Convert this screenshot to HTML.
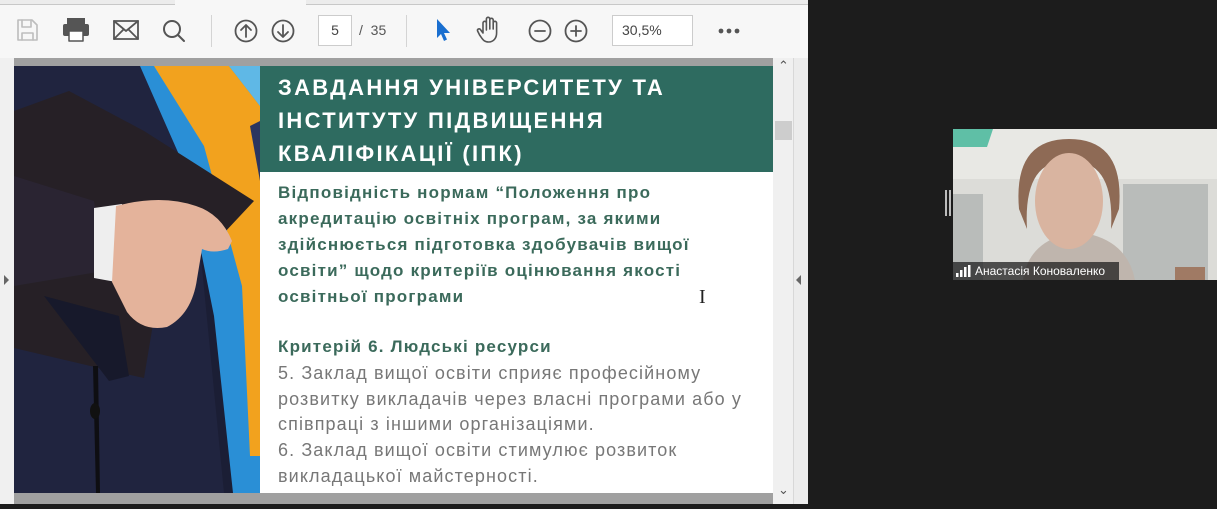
<!DOCTYPE html>
<html><head><meta charset="utf-8"><style>
*{margin:0;padding:0;box-sizing:border-box}
body{width:1217px;height:509px;background:#1c1c1c;position:relative;overflow:hidden;font-family:"Liberation Sans",sans-serif}
.abs{position:absolute}
.tb{left:0;top:0;width:808px;height:58px;background:#f7f7f7}
.sep{position:absolute;top:15px;width:1px;height:32px;background:#d4d4d4}
.ico{position:absolute}
.title{color:#fff;font-weight:bold;font-size:22px;letter-spacing:2.3px;line-height:33px;left:278px;top:71px;white-space:nowrap}
.bt{color:#3b6a5b;font-weight:bold;font-size:17px;letter-spacing:1.2px;line-height:26px;white-space:nowrap;left:278px}
.rt{color:#777;font-size:18px;letter-spacing:1.1px;line-height:25.7px;white-space:nowrap;left:278px}
</style></head><body>
<div class="abs tb"></div>
<div class="abs" style="left:0;top:4px;width:175px;height:1px;background:#c8c8c8"></div>
<div class="abs" style="left:306px;top:4px;width:502px;height:1px;background:#c8c8c8"></div>
<div class="abs" style="left:0;top:0;width:175px;height:4px;background:#ececec"></div>
<div class="abs" style="left:306px;top:0;width:502px;height:4px;background:#ececec"></div>
<svg class="ico" style="left:0;top:0" width="808" height="58" viewBox="0 0 808 58" fill="none" stroke-linecap="round" stroke-linejoin="round">
 <g stroke="#bdbdbd" stroke-width="1.6"><path d="M18 20h14l5 5v15H18z"/><path d="M22 20v7h9v-7M22 40v-7h11v7"/></g>
 <g fill="#555"><rect x="67" y="18" width="18" height="6"/><rect x="63" y="24" width="26" height="12" rx="2"/></g>
 <rect x="69" y="31" width="14" height="10" fill="#fff" stroke="#555" stroke-width="1.5"/>
 <g stroke="#555" stroke-width="1.8"><rect x="114" y="21" width="24" height="18"/><path d="M114 21l12 10 12-10M114 39l9-9M138 39l-9-9"/></g>
 <g stroke="#555" stroke-width="2"><circle cx="172" cy="29" r="8"/><path d="M178 35l6 6"/></g>
 <g stroke="#555" stroke-width="1.8"><circle cx="246" cy="31" r="10.5"/><path d="M246 37V25M241 30l5-5 5 5"/><circle cx="283" cy="31" r="10.5"/><path d="M283 25v12M278 32l5 5 5-5"/></g>
 <path d="M437 19v19l4-4 3 7 3-1.5-3-6.5h6z" fill="#1a6fd0"/>
 <g stroke="#555" stroke-width="1.6"><path d="M483 33v-10a1.7 1.7 0 013.4 0v7M486.4 29V19a1.7 1.7 0 013.4 0v10M489.8 28V20a1.7 1.7 0 013.4 0v9M493.2 29v-6a1.7 1.7 0 013.4 0v10c0 5-3 9-8 9s-6-3-9-7l-2-4a1.6 1.6 0 012.8-1.5l2.6 3.5"/></g>
 <g stroke="#555" stroke-width="1.8"><circle cx="540" cy="31" r="10.5"/><path d="M535 31h10"/><circle cx="576" cy="31" r="10.5"/><path d="M571 31h10M576 26v10"/></g>
 <g fill="#555"><circle cx="721" cy="31" r="2.4"/><circle cx="729" cy="31" r="2.4"/><circle cx="737" cy="31" r="2.4"/></g>
 <path d="M677 29h7l-3.5 4z" fill="#555"/>
</svg>
<div class="sep" style="left:211px"></div><div class="sep" style="left:406px"></div>
<div class="abs" style="left:318px;top:15px;width:34px;height:31px;background:#fff;border:1px solid #ccc;font-size:14px;color:#444;text-align:center;line-height:29px">5</div>
<div class="abs" style="left:359px;top:22px;font-size:14px;color:#555">/ &nbsp;35</div>
<div class="abs" style="left:612px;top:15px;width:81px;height:31px;background:#fff;border:1px solid #ccc;font-size:14px;color:#444;line-height:29px;padding-left:9px">30,5%</div>
<div class="abs" style="left:0;top:58px;width:14px;height:446px;background:#f0f0f0"></div>
<div class="abs" style="left:4px;top:275px;width:0;height:0;border-left:5px solid #666;border-top:5px solid transparent;border-bottom:5px solid transparent"></div>
<div class="abs" style="left:14px;top:58px;width:759px;height:8px;background:#a0a0a0"></div>
<div class="abs" style="left:14px;top:493px;width:759px;height:11px;background:#a0a0a0"></div>
<div class="abs" style="left:773px;top:58px;width:20px;height:446px;background:#f0f0f0"></div>
<div class="abs" style="left:775px;top:121px;width:17px;height:19px;background:#cdcdcd"></div>
<div class="abs" style="left:778px;top:58px;font-size:13px;color:#555">&#8963;</div>
<div class="abs" style="left:778px;top:482px;font-size:13px;color:#555">&#8964;</div>
<div class="abs" style="left:793px;top:58px;width:15px;height:446px;background:#ececec;border-left:1px solid #d8d8d8"></div>
<div class="abs" style="left:796px;top:275px;width:0;height:0;border-right:5px solid #666;border-top:5px solid transparent;border-bottom:5px solid transparent"></div>
<svg class="abs" style="left:14px;top:66px" width="246" height="427" viewBox="0 0 246 427">
 <rect width="246" height="427" fill="#1b1e35"/>
 <path d="M0 0h140l40 120 30 307H0z" fill="#20243f"/>
 <path d="M126 0h120v427h-27l-19-177-30-150z" fill="#2a8fd6"/>
 <path d="M140 0h75l31 40v350h-10l-8-170-38-140z" fill="#f2a21e"/>
 <path d="M215 0h31v40z" fill="#5fb8e6"/>
 <path d="M236 60l10-5v60z" fill="#2b3560"/>
 <path d="M0 45l55-20 75 40 110 70-30 32-55-5-25 150-45-10-85-20z" fill="#262026"/>
 <path d="M0 110l80 25 10 70-90 15z" fill="#2a2432"/>
 <path d="M80 142l28-4-6 78-22-4z" fill="#eee"/>
 <path d="M102 140q45-12 80 0 25 8 36 35l-4 8q-15 5-26 0l-5 30q-5 35-30 48-25 5-40-15l-15-30z" fill="#e4b39b"/>
 <path d="M30 230l75 20 10 60-20 5z" fill="#17192b"/>
 <path d="M79 300l3 127h4l-2-127z" fill="#0e0e12"/>
 <ellipse cx="81" cy="345" rx="5" ry="8" fill="#111"/>
</svg>
<div class="abs" style="left:260px;top:66px;width:513px;height:106px;background:#2e6b60"></div>
<div class="abs" style="left:260px;top:172px;width:513px;height:321px;background:#fff"></div>
<div class="abs title">ЗАВДАННЯ УНІВЕРСИТЕТУ ТА<br>ІНСТИТУТУ ПІДВИЩЕННЯ<br>КВАЛІФІКАЦІЇ (ІПК)</div>
<div class="abs bt" style="top:180px">Відповідність нормам “Положення про<br>акредитацію освітніх програм, за якими<br>здійснюється підготовка здобувачів вищої<br>освіти” щодо критеріїв оцінювання якості<br>освітньої програми</div>
<div class="abs bt" style="top:334px">Критерій 6. Людські ресурси</div>
<div class="abs rt" style="top:361px">5. Заклад вищої освіти сприяє професійному<br>розвитку викладачів через власні програми або у<br>співпраці з іншими організаціями.<br>6. Заклад вищої освіти стимулює розвиток<br>викладацької майстерності.</div>
<div class="abs" style="left:699px;top:286px;font-size:20px;color:#222;font-family:'Liberation Serif',serif">I</div>
<div class="abs" style="left:945px;top:190px;width:2px;height:26px;background:#bbb"></div>
<div class="abs" style="left:949px;top:190px;width:2px;height:26px;background:#bbb"></div>
<svg class="abs" style="left:953px;top:129px" width="264" height="151" viewBox="0 0 264 151">
 <rect width="264" height="151" fill="#dcdcd8"/>
 <rect y="0" width="264" height="50" fill="#e8e8e4"/>
 <path d="M0 0h40l-6 18H0z" fill="#5fbfa6"/>
 <path d="M170 55h85v96h-85zM0 65h30v86H0z" fill="#b9bcba"/>
 <rect x="222" y="138" width="30" height="13" fill="#a07a64"/>
 <path d="M70 151q5-35 40-45h30q35 10 42 45z" fill="#bfb5ad"/>
 <path d="M66 80q-6-70 50-70t50 70l-8 20q4-70-42-68-46-2-42 68z" fill="#8e6a55"/>
 <ellipse cx="116" cy="72" rx="34" ry="48" fill="#d9b4a0"/>
</svg>
<div class="abs" style="left:953px;top:262px;width:166px;height:18px;background:rgba(30,30,30,.75)"></div>
<svg class="abs" style="left:956px;top:265px" width="16" height="12"><rect x="0" y="8" width="2.5" height="4" fill="#fff"/><rect x="4" y="5" width="2.5" height="7" fill="#fff"/><rect x="8" y="2" width="2.5" height="10" fill="#fff"/><rect x="12" y="0" width="2.5" height="12" fill="#fff"/></svg>
<div class="abs" style="left:975px;top:264px;font-size:12px;color:#fff;white-space:nowrap">Анастасія Коноваленко</div>
</body></html>
